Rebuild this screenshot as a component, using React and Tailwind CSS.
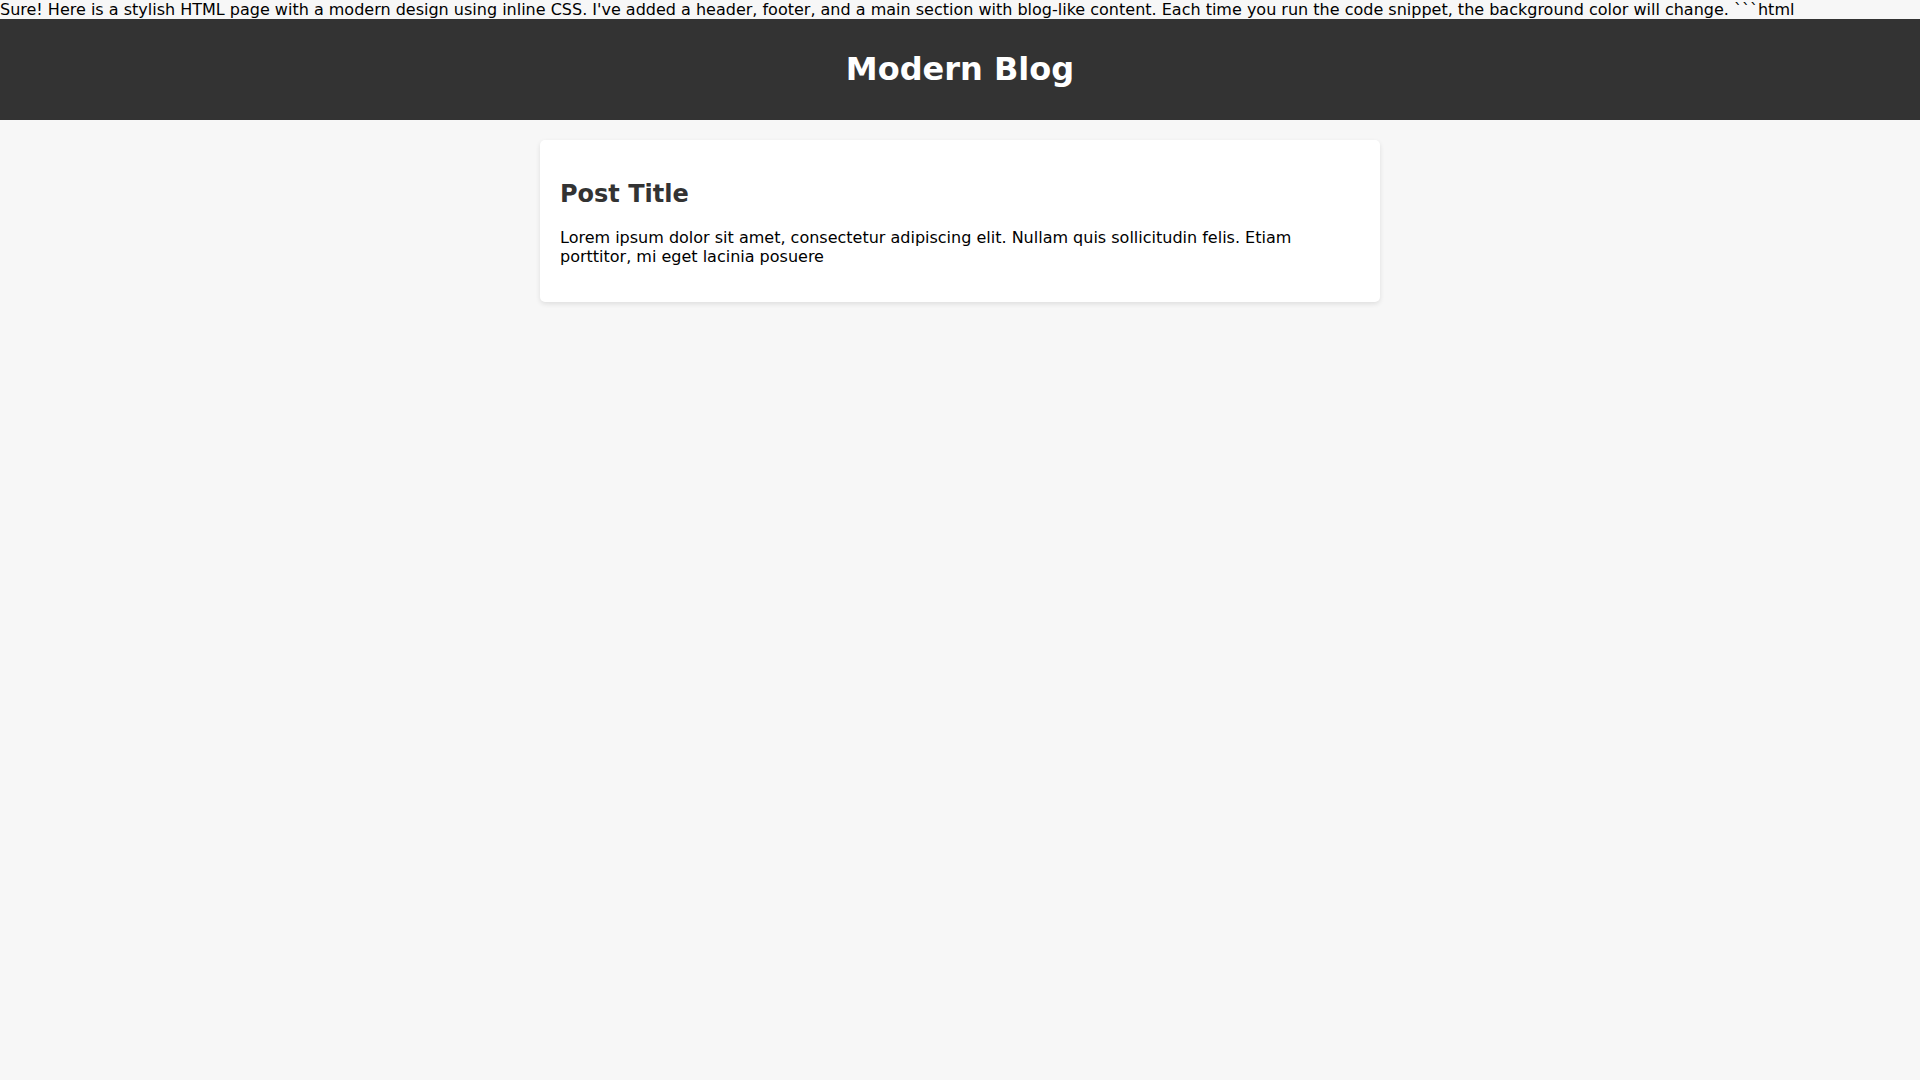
import React from 'react';

const posts = [
  {
    title: 'Post Title',
    body: 'Lorem ipsum dolor sit amet, consectetur adipiscing elit. Nullam quis sollicitudin felis. Etiam porttitor, mi eget lacinia posuere',
  },
];

const App = () => (
  <div className="min-h-screen bg-[#f7f7f7] text-black font-['DejaVu_Sans',sans-serif] text-base leading-[normal]">
    <div>
      Sure! Here is a stylish HTML page with a modern design using inline CSS. I've added a header, footer, and a main
      section with blog-like content. Each time you run the code snippet, the background color will change. ```html
    </div>

    <header className="bg-[#333333] text-white text-center py-[10px]">
      <h1 className="text-[32px] font-bold my-[21.44px]">Modern Blog</h1>
    </header>

    <main className="max-w-[840px] mx-auto mt-5">
      {posts.map((p, i) => (
        <article key={i} className="bg-white rounded-[5px] shadow-[0_2px_5px_rgba(0,0,0,0.1)] p-5">
          <h2 className="text-[24px] font-bold text-[#333333] mt-[19.92px] mb-[19.92px]">{p.title}</h2>
          <p className="mb-4">{p.body}</p>
        </article>
      ))}
    </main>
  </div>
);

export default App;
